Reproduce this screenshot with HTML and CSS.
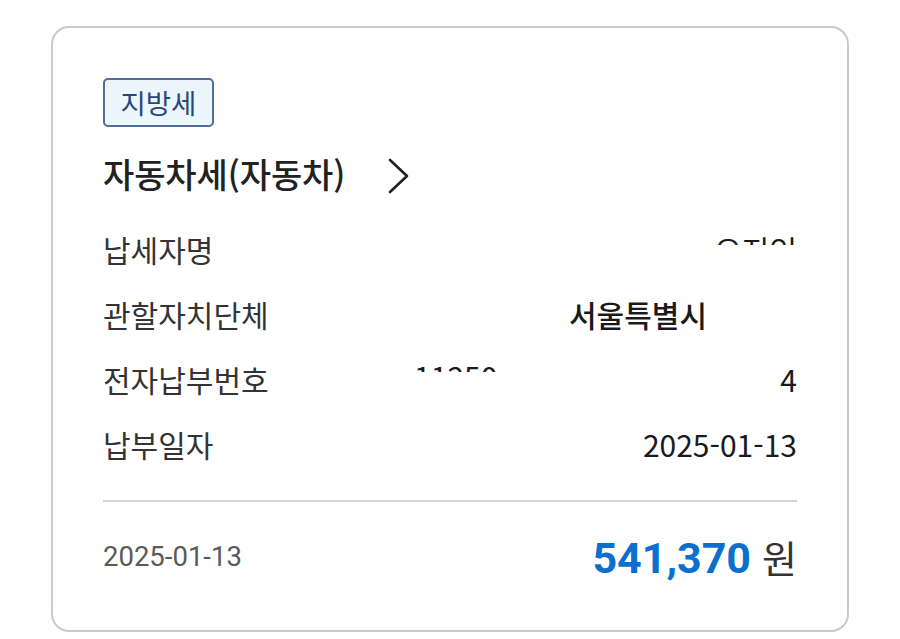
FILE: index.html
```html
<!DOCTYPE html>
<html lang="ko">
<head>
<meta charset="utf-8">
<link rel="stylesheet" href="styles.css">
</head>
<body>
<div class="card">
  <span class="badge">지방세</span>
  <div class="title-row">
    <span class="title">자동차세(자동차)</span>
    <svg class="chev" width="24" height="38" viewBox="0 0 24 38"><path d="M4 3 L21 19 L4 35" fill="none" stroke="#222" stroke-width="2.6" stroke-linecap="round" stroke-linejoin="round"/></svg>
  </div>
  <div class="rows">
    <div class="row">
      <span class="label">납세자명</span>
      <span class="value"><span class="clip up"><span>오지인</span></span></span>
    </div>
    <div class="row">
      <span class="label">관할자치단체</span>
      <span class="value medium">서울특별시<span class="gap"></span></span>
    </div>
    <div class="row">
      <span class="label">전자납부번호</span>
      <span class="value split"><span class="clip low"><span>11250</span></span><span>4</span></span>
    </div>
    <div class="row">
      <span class="label">납부일자</span>
      <span class="value">2025-01-13</span>
    </div>
  </div>
  <div class="divider"></div>
  <div class="bottom">
    <span class="date">2025-01-13</span>
    <span class="amount"><b>541,370</b><span class="won">원</span></span>
  </div>
</div>
</body>
</html>
```
FILE: styles.css
```css
html, body { margin: 0; padding: 0; background: #fff; }
body { font-family: "Noto Sans CJK KR", "Noto Sans", sans-serif; color: #222; }
.card {
  margin: 26px 0 0 51px;
  width: 798px;
  height: 606px;
  box-sizing: border-box;
  border: 2px solid #cacaca;
  border-radius: 18px;
  padding: 50px 50px 0 50px;
  display: flex;
  flex-direction: column;
  align-items: stretch;
}
.badge {
  align-self: flex-start;
  box-sizing: border-box;
  height: 49px;
  display: inline-flex;
  align-items: center;
  padding: 0 15.5px;
  border: 2px solid #4f6f98;
  border-radius: 5px;
  background: #eef6fd;
  color: #27497a;
  font-size: 27.5px;
  line-height: 1;
}
.title-row {
  margin-top: 21px;
  height: 50px;
  display: flex;
  align-items: center;
  gap: 41px;
}
.title { font-size: 34px; font-weight: 500; color: #222; letter-spacing: -0.1px; }
.chev { margin-top: 6px; }
.rows { margin-top: 18px; display: flex; flex-direction: column; }
.row {
  height: 65px;
  display: flex;
  align-items: center;
  justify-content: space-between;
}
.label { font-size: 30px; color: #333; }
.value { font-size: 30px; color: #1a1a1a; font-weight: 400; display: flex; align-items: center; }
.medium { font-weight: 500; }
.split { gap: 283px; }
.gap { display: inline-block; width: 90px; }
.clip { display: inline-block; height: 11px; overflow: hidden; line-height: 1; }
.clip > span { display: block; font-size: 30px; }
.up { margin-bottom: 19px; }
.low { align-self: flex-start; margin-top: 4px; height: 11px; }
.divider { margin-top: 24px; height: 2px; background: #d4d4d4; }
.bottom {
  height: 108px;
  display: flex;
  align-items: center;
  justify-content: space-between;
}
.date { font-family: Roboto, "Noto Sans", sans-serif; font-size: 27.5px; color: #5a5a5a; }
.amount { display: flex; align-items: baseline; gap: 11px; }
.amount b { font-family: Roboto, sans-serif; font-weight: 700; font-size: 43px; color: #0b6fcf; }
.won { font-size: 38px; color: #333; font-weight: 400; }
```
